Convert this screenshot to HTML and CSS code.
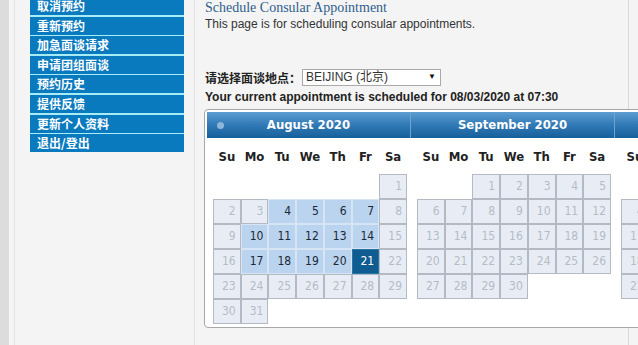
FILE: index.html
```html
<!DOCTYPE html>
<html lang="zh-cn">
<head>
  <meta charset="UTF-8" />
  <meta name="viewport" content="width=device-width, initial-scale=1.0" />
  <title>Schedule Consular Appointment</title>
  <link rel="stylesheet" href="styles.css">
</head>
<body>

  <div class="page">
    <div class="edge"></div>

    <div class="sidebar">
      <ul class="nav">
        <li><a href="#">取消预约</a></li>
        <li><a href="#">重新预约</a></li>
        <li><a href="#">加急面谈请求</a></li>
        <li><a href="#">申请团组面谈</a></li>
        <li><a href="#">预约历史</a></li>
        <li><a href="#">提供反馈</a></li>
        <li><a href="#">更新个人资料</a></li>
        <li><a href="#">退出/登出</a></li>
      </ul>
    </div>

    <div class="main">
      <h1 class="title">Schedule Consular Appointment</h1>
      <p class="intro">This page is for scheduling consular appointments.</p>

      <div class="post-row">
        <label for="post">请选择面谈地点：</label>
        <span class="select-wrap">
          <select id="post">
            <option>BEIJING (北京)</option>
          </select>
          <span class="select-arrow">▼</span>
        </span>
      </div>

      <p class="current">Your current appointment is scheduled for 08/03/2020 at 07:30</p>

      <div class="datepicker" id="datepicker"></div>
    </div>
  </div>

  <script>
    // Calendário de três meses
    const months = [
      { title: 'August 2020', month: 7 },
      { title: 'September 2020', month: 8 },
      { title: 'October 2020', month: 9 }
    ];
    const available = { 7: [4, 5, 6, 7, 10, 11, 12, 13, 14, 17, 18, 19, 20] };
    const selected = { 7: 21 };
    const dayNames = ['Su', 'Mo', 'Tu', 'We', 'Th', 'Fr', 'Sa'];

    const picker = document.getElementById('datepicker');

    months.forEach((m, index) => {
      const block = document.createElement('div');
      block.className = 'dp-month';

      let html = '<div class="dp-header">';
      if (index === 0) html += '<span class="dp-prev"></span>';
      html += m.title + '</div>';

      html += '<table class="dp-table"><thead><tr>';
      dayNames.forEach(d => { html += '<th>' + d + '</th>'; });
      html += '</tr></thead><tbody><tr>';

      const first = new Date(2020, m.month, 1).getDay();
      const total = new Date(2020, m.month + 1, 0).getDate();
      const open = available[m.month] || [];

      for (let i = 0; i < first; i++) html += '<td></td>';

      for (let day = 1; day <= total; day++) {
        const col = (first + day - 1) % 7;
        let cls = 'off';
        if (open.includes(day)) cls = 'open';
        if (selected[m.month] === day) cls = 'picked';
        html += '<td><span class="day ' + cls + '">' + day + '</span></td>';
        if (col === 6 && day < total) html += '</tr><tr>';
      }
      html += '</tr></tbody></table>';

      block.innerHTML = html;
      picker.appendChild(block);
    });
  </script>
</body>
</html>
```

FILE: styles.css
```css
:root {
  --page-bg: #f4f4f4;
  --edge-gray: #dcdcdc;
  --line-gray: #e2e2e2;
  --nav-blue: #0a7abf;
  --nav-gap: #a6ecf6;
  --title-blue: #2f5f8c;
  --text-dark: #222;
  --off-bg: #e8edf5;
  --off-border: #b3bac4;
  --off-text: #b5bcc6;
  --open-bg: #bad3ee;
  --open-border: #d6e4f3;
  --picked-bg: #0f5c90;
}

* {
  box-sizing: border-box;
}

body {
  margin: 0;
  background-color: var(--page-bg);
  font-family: 'Liberation Sans', 'Noto Sans CJK SC', sans-serif;
  font-size: 12px;
  color: var(--text-dark);
  overflow: hidden;
}

.page {
  display: flex;
  min-height: 100vh;
}

.edge {
  width: 9px;
  flex-shrink: 0;
  background-color: var(--edge-gray);
}

/* Menu lateral */
.sidebar {
  width: 181px;
  flex-shrink: 0;
  margin-left: 5px;
  padding: 0 10px 0 15px;
  border-left: 1px solid var(--line-gray);
  border-right: 1px solid var(--line-gray);
}

.nav {
  list-style: none;
  margin: -3px 0 0;
  padding: 0;
  background-color: var(--nav-gap);
}

.nav li {
  margin-bottom: 1.6px;
}
.nav li:last-child {
  margin-bottom: 0;
}

.nav a {
  display: block;
  height: 18px;
  line-height: 18px;
  padding-left: 7px;
  background-color: var(--nav-blue);
  color: #fff;
  font-family: 'Noto Sans CJK SC', sans-serif;
  font-weight: 700;
  font-size: 12px;
  text-decoration: none;
}

/* Conteúdo */
.main {
  width: 424px;
  flex-shrink: 0;
  margin-left: 10px;
  border-right: 1px solid #dadada;
}

.title {
  margin: 0;
  font-family: 'Liberation Serif', serif;
  font-weight: 400;
  font-size: 14px;
  line-height: 16px;
  color: var(--title-blue);
}

.intro {
  margin: 0;
  line-height: 16px;
  color: #333;
}

.post-row {
  display: flex;
  align-items: center;
  height: 18px;
  margin-top: 36px;
}

.post-row label {
  font-family: 'Noto Sans CJK SC', sans-serif;
  font-weight: 700;
  font-size: 12px;
  width: 97px;
}

.select-wrap {
  position: relative;
  display: inline-block;
}

.select-wrap select {
  appearance: none;
  -webkit-appearance: none;
  width: 139px;
  height: 17px;
  margin: 0;
  padding: 0 0 0 3px;
  border: 1px solid #a9a9a9;
  border-radius: 0;
  background-color: #fff;
  font-family: 'Liberation Sans', 'Noto Sans CJK SC', sans-serif;
  font-size: 12px;
  line-height: 15px;
  color: #333;
}

.select-arrow {
  position: absolute;
  right: 5px;
  top: 3px;
  font-size: 8px;
  line-height: 10px;
  color: #111;
  pointer-events: none;
}

.current {
  margin: 3px 0 4px;
  line-height: 16px;
  font-weight: 700;
  white-space: nowrap;
}

/* Calendário */
.datepicker {
  display: flex;
  align-items: flex-start;
  width: max-content;
  margin-left: -1px;
  padding: 2px 2px 3px;
  background-color: #fff;
  border: 1px solid #a8a8a8;
  border-radius: 4px;
}

.dp-month {
  width: 204px;
}

.dp-header {
  position: relative;
  height: 26px;
  line-height: 26px;
  text-align: center;
  font-family: 'DejaVu Sans Condensed', 'DejaVu Sans', sans-serif;
  font-weight: 700;
  font-size: 13px;
  color: #fff;
  background: linear-gradient(#5d9dd2, #3179b6 50%, #16609b);
  border-right: 1px solid #6fa3cf;
}

.dp-prev {
  position: absolute;
  left: 10px;
  top: 10px;
  width: 7px;
  height: 7px;
  border-radius: 50%;
  background-color: #8cb5da;
}

.dp-table {
  width: 194px;
  margin-left: 6px;
  border-collapse: separate;
  border-spacing: 0;
  table-layout: fixed;
  font-family: 'DejaVu Sans Condensed', 'DejaVu Sans', sans-serif;
}

.dp-table th {
  height: 36px;
  padding: 0;
  font-size: 13px;
  font-weight: 700;
  color: #222;
  text-align: center;
}

.dp-table td {
  height: 25px;
  padding: 0;
}

.day {
  display: block;
  height: 25px;
  line-height: 23px;
  padding-right: 4px;
  text-align: right;
  font-size: 12px;
  border: 1px solid var(--off-border);
}

.day.off {
  background-color: var(--off-bg);
  color: var(--off-text);
}

.day.open {
  background-color: var(--open-bg);
  border-color: var(--open-border);
  color: #1c2836;
}

.day.picked {
  background-color: var(--picked-bg);
  border-color: #2a73a6;
  color: #fff;
}
```
